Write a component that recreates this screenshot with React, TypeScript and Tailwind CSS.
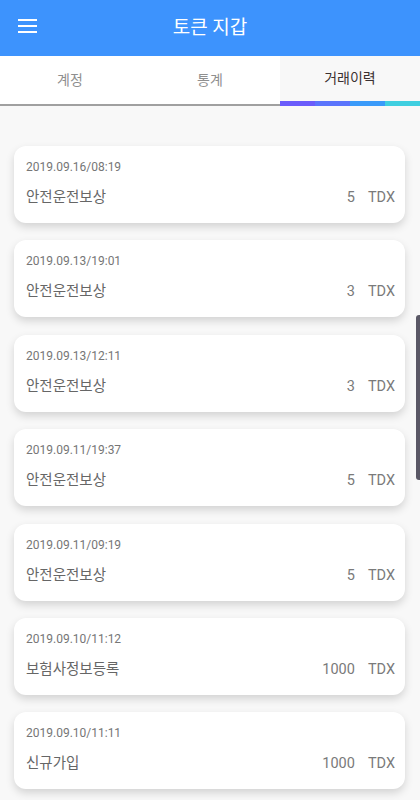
import React from 'react';

const history = [
  { date: '2019.09.16/08:19', title: '안전운전보상', amount: 5 },
  { date: '2019.09.13/19:01', title: '안전운전보상', amount: 3 },
  { date: '2019.09.13/12:11', title: '안전운전보상', amount: 3 },
  { date: '2019.09.11/19:37', title: '안전운전보상', amount: 5 },
  { date: '2019.09.11/09:19', title: '안전운전보상', amount: 5 },
  { date: '2019.09.10/11:12', title: '보험사정보등록', amount: 1000 },
  { date: '2019.09.10/11:11', title: '신규가입', amount: 1000 },
];

const font = { fontFamily: 'Roboto, "Noto Sans CJK KR", sans-serif' };

export default function App() {
  return (
    <div className="relative h-[800px] w-[420px] overflow-hidden bg-[#f8f8f8]" style={font}>
      {/* Header */}
      <div className="relative flex h-[56px] items-center justify-center bg-[#3d93fd]">
        <button className="absolute left-[18px] top-[19px] flex w-[19px] flex-col gap-[4px]">
          <span className="h-[2px] w-full bg-white" />
          <span className="h-[2px] w-full bg-white" />
          <span className="h-[2px] w-full bg-white" />
        </button>
        <h1 className="text-[19px] font-normal text-white">토큰 지갑</h1>
      </div>

      {/* Tabs */}
      <div className="flex h-[50px]">
        <div className="flex flex-1 flex-col bg-white">
          <div className="flex flex-1 items-center justify-center text-[14px] text-[#8f8f8f]">계정</div>
          <div className="h-[2px] bg-[#a0a0a0]" />
        </div>
        <div className="flex flex-1 flex-col bg-white">
          <div className="flex flex-1 items-center justify-center text-[14px] text-[#8f8f8f]">통계</div>
          <div className="h-[2px] bg-[#a0a0a0]" />
        </div>
        <div className="flex flex-1 flex-col bg-[#f8f8f8]">
          <div className="flex flex-1 items-center justify-center text-[14px] text-[#3a3030]">거래이력</div>
          <div className="flex h-[5px]">
            <div className="flex-1 bg-[#6a5cfb]" />
            <div className="flex-1 bg-[#5b74fc]" />
            <div className="flex-1 bg-[#3a9bfa]" />
            <div className="flex-1 bg-[#40cfe0]" />
          </div>
        </div>
      </div>

      {/* List */}
      <div className="flex flex-col gap-[17.4px] pl-[14px] pr-[15px] pt-[40px]">
        {history.map((h, i) => (
          <div
            key={i}
            className="flex h-[77px] flex-col rounded-[12px] bg-white pl-[12px] pr-[10px] pt-[13px] shadow-[0_4px_9px_rgba(0,0,0,0.15)]"
          >
            <div className="text-[12px] leading-[16px] text-[#767676]">{h.date}</div>
            <div className="mt-[13px] flex items-center justify-between text-[14.5px] leading-[20px] text-[#666666]">
              <span>{h.title}</span>
              <span className="flex gap-[13px] text-[#7a7a7a]">
                <span>{h.amount}</span>
                <span>TDX</span>
              </span>
            </div>
          </div>
        ))}
      </div>

      {/* scrollbar */}
      <div className="absolute right-0 top-[315px] h-[165px] w-[4px] rounded-l-[3px] bg-[#5a5866]" />
    </div>
  );
}
